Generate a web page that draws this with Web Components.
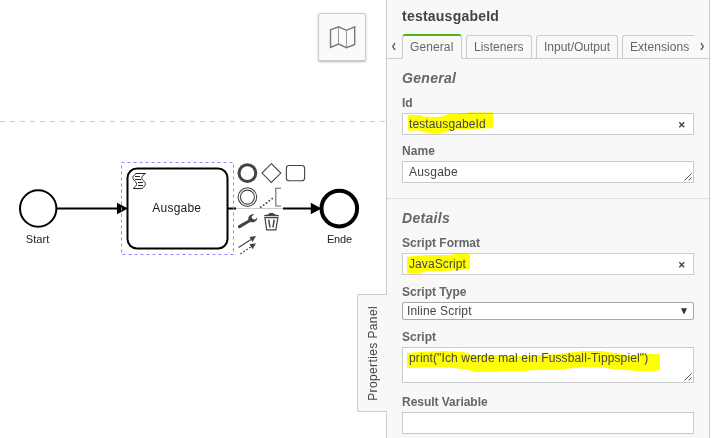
<!DOCTYPE html>
<html lang="en">
<head>
<meta charset="utf-8">
<title>Process modeler</title>
<style>
html,body{margin:0;height:100%;overflow:hidden;background:#fff}
body{font-family:"Liberation Sans",Arial,sans-serif;font-size:12px;color:#444}
</style>
</head>
<body>
<modeler-app></modeler-app>
<script>
function define(name, html, setup) {
  const template = document.createElement('template');
  template.innerHTML = html;
  customElements.define(name, class extends HTMLElement {
    constructor() {
      super();
      this.attachShadow({mode: 'open'}).append(template.content.cloneNode(true));
    }
    connectedCallback() { if (setup) setup(this, this.shadowRoot); }
  });
}

define('process-diagram', `
<style>
:host{display:block;width:386px;height:438px}
svg{display:block}
text{fill:#222;font-family:"Liberation Sans",Arial,sans-serif}
</style>
<svg width="386" height="438" viewBox="0 0 386 438" fill="none">
  <path d="M0 121.5H386" stroke="#ccc" stroke-dasharray="5 5"/>
  <g stroke="#000" stroke-width="2">
    <circle cx="38.2" cy="208.5" r="18.2"/>
    <path d="M57 208.5H119M228 208.5H313"/>
    <circle cx="339.3" cy="208.6" r="17.8" stroke-width="4"/>
    <rect x="127.5" y="168.5" width="100" height="80" rx="9.5" fill="#fff"/>
  </g>
  <path d="M117 202.8L128 208.5L117 214.2ZM310.8 202.8L321.5 208.5L310.8 214.2Z" fill="#000"/>
  <rect x="121.5" y="162.5" width="112" height="92" stroke="#8888ff" stroke-dasharray="3 3"/>
  <g stroke="#111" stroke-width=".9">
    <path d="M136 173.5H145.5C141.5 176 140.7 178.3 143.2 180.5C146.3 183.2 146.3 185.2 142 188.5H133.2C137 185.6 137.7 183.6 134.8 181C131.8 178.4 132.2 176.2 136 173.5Z"/>
    <path d="M135 176.5H140M135 179.5H141M138 182.5H143M138 185.5H143"/>
  </g>
  <text x="25.8" y="243" font-size="11" textLength="23.5">Start</text>
  <text x="152.3" y="212" font-size="12" textLength="48.7">Ausgabe</text>
  <text x="327" y="243" font-size="11" textLength="25">Ende</text>
  <path d="M236 208.5H283" stroke="#fff" stroke-width="3"/>
  <path d="M236 208.5H283" stroke="#ccc" stroke-width="1"/>
  <g stroke="#444" stroke-width="1.1">
    <circle cx="247.4" cy="173.1" r="8.4" stroke-width="3"/>
    <path d="M271.4 163.7L280.8 173.1L271.4 182.5L262 173.1Z"/>
    <rect x="286.4" y="165.5" width="18.2" height="15.2" rx="2.8"/>
    <circle cx="247.4" cy="197.1" r="9.3"/>
    <circle cx="247.4" cy="197.1" r="7"/>
    <path d="M281 188.2H275.8V206H281" stroke="#666"/>
    <path d="M260.7 207.3L275 196.5" stroke-width="1.9" stroke-linecap="round" stroke-dasharray="0 3.6"/>
    <path d="M264.9 217.6L266.7 229.9H275.8L278 217.6Z" stroke-width="1.2"/>
    <path d="M268.7 219.5L270 227.5M274.2 219.5L273 227.5" stroke-width="1.5"/>
    <path d="M238.5 247.5L251 239.5"/>
    <path d="M240.3 254L251 246.7" stroke-dasharray="2 1.5"/>
  </g>
  <g fill="#444">
    <path d="M264 216.2V215.2L268.5 214.3L269.5 213H273.5L274.5 214.3L279 215.2V216.2Z"/>
    <path d="M238.2 225.5L248.3 219.7C247.9 216.4 250.5 213.6 254.2 214.4L251.5 216.5L252.5 219L255 219.5L257.3 217.4C257.5 220.8 253.8 223 250.2 222L240 228.2C238.4 228.5 237.4 226.7 238.2 225.5Z"/>
    <path d="M256 236L249.4 237L252.6 242.1ZM256 243.2L249.4 244.2L252.6 249.3Z"/>
  </g>
</svg>`);

define('map-toggle', `
<style>
:host{display:flex;box-sizing:border-box;width:48px;height:48px;align-items:center;justify-content:center;background:#fafafa;border:1px solid #ccc;border-radius:2px;box-shadow:0 1px 2px rgba(0,0,0,.3)}
svg{display:block}
</style>
<svg width="28" height="24" viewBox="0 0 28 24" fill="none" stroke="#777">
  <path d="M2.5 4.8L10.5 1.8L18.5 5.3L26.7 1.8V19.5L18.5 22.7L10.5 19L2.5 22.4Z" stroke-width="1.4"/>
  <path d="M10.5 2V19M18.5 5V22.5" stroke-width="1" stroke="#999"/>
</svg>`);

define('panel-toggle', `
<style>
:host{display:flex;box-sizing:border-box;width:30px;height:118px;align-items:center;justify-content:center;background:#f8f8f8;border:1px solid #ccc;border-right:0;border-radius:2px 0 0 2px}
span{writing-mode:vertical-rl;transform:rotate(180deg);font-size:12px;letter-spacing:.38px;white-space:nowrap;color:#444}
</style><span><slot></slot></span>`);

define('panel-tab', `
<style>
:host{display:block;box-sizing:border-box;flex:none;height:23px;border:1px solid #ccc;border-bottom:0;border-radius:3px 3px 0 0;background:#f8f8f8;padding:4px 0 0 7px;line-height:15px;color:#666;white-space:nowrap}
:host([active]){height:25px;border-top:2px solid #52b415;margin-bottom:-1px}
:host([clipped]){border-right:0;border-top-right-radius:0}
</style><slot></slot>`);

define('tab-bar', `
<style>
:host{display:flex;align-items:flex-end;box-sizing:border-box;height:25px;border-bottom:1px solid #ccc}
.tabs{display:flex;gap:4px;align-items:flex-end;width:292px}
svg{flex:none;width:15px;height:24px}
</style>
<svg viewBox="0 0 15 24" fill="none" stroke="#555" stroke-width="1.4"><path d="M8 9L5.8 12.5L8 16"/></svg>
<div class="tabs"><slot></slot></div>
<svg viewBox="0 0 15 24" fill="none" stroke="#555" stroke-width="1.4"><path d="M7 9L9.2 12.5L7 16"/></svg>`);

define('panel-group', `
<style>
:host{display:block;padding:11px 15px 0}
h2{margin:0 0 10px;font:italic bold 14px/16px "Liberation Sans",Arial,sans-serif;letter-spacing:.3px;color:#666}
</style><h2></h2><slot></slot>`,
(el, root) => root.querySelector('h2').textContent = el.getAttribute('heading'));

define('property-field', `
<style>
:host{display:block;height:48px}
.label{height:14px;line-height:14px;font-weight:bold;color:#666;margin-bottom:3px;white-space:nowrap}
.box{position:relative;box-sizing:border-box;display:flex;justify-content:space-between;width:292px;height:22px;border:1px solid #ccc;background:#fff;padding:0 7px 0 6px;line-height:20px;color:#444;white-space:nowrap}
.value{position:relative;letter-spacing:var(--value-spacing,.1px)}
.mark{position:absolute;left:0;top:0;overflow:visible;mix-blend-mode:multiply;pointer-events:none}
.clear,.arrow,.grip{display:none;flex:none}
:host([clearable]) .clear{display:block;align-self:center;margin-top:2px}
:host([kind=area]) .grip,:host([kind=tall]) .grip{display:block;align-self:flex-end;margin:0 -6px 1px}
:host([kind=tall]) .box{height:36px}
:host([kind=select]) .box{height:18px;border-color:#a9a9a9;border-radius:2px;padding-left:4px;line-height:16px}
:host([kind=select]) .arrow{display:block;align-self:center;margin-right:-1px}
</style>
<div class="label"></div>
<div class="box">
  <svg class="mark" width="290" height="20"></svg>
  <span class="value"><slot></slot></span>
  <svg class="clear" width="8" height="8" viewBox="0 0 8 8" stroke="#444" stroke-width="1.4"><path d="M1.3 1.2L6.2 6.3M6.2 1.2L1.3 6.3"/></svg>
  <svg class="arrow" width="6" height="6" viewBox="0 0 6 6" fill="#333"><path d="M0 .2H6L3.3 6H2.7Z"/></svg>
  <svg class="grip" width="8" height="8" viewBox="0 0 8 8" stroke="#555"><path d="M.5 7.5L7.5 .5M4.5 7.5L7.5 4.5"/></svg>
</div>`,
(el, root) => {
  root.querySelector('.label').textContent = el.getAttribute('label');
  root.querySelector('.label').style.letterSpacing = el.getAttribute('spacing') || '0';
  const mark = el.getAttribute('mark');
  if (mark) root.querySelector('.mark').innerHTML = '<path fill="#ff0" d="' + mark + '"/>';
});

define('properties-panel', `
<style>
:host{display:block;box-sizing:border-box;width:324px;height:438px;overflow:hidden;background:#f8f8f8;border:1px solid #ccc;border-width:0 1px}
h1{margin:0;padding:8px 15px 0;height:26px;box-sizing:border-box;font:bold 14px/16px "Liberation Sans",Arial,sans-serif;letter-spacing:.23px;color:#444}
tab-bar{margin-top:8px}
.details{margin-top:6px;border-top:1px dotted #ccc}
</style>
<h1>testausgabeId</h1>
<tab-bar>
  <panel-tab active style="width:60px;letter-spacing:.1px">General</panel-tab>
  <panel-tab style="width:66px;letter-spacing:.1px">Listeners</panel-tab>
  <panel-tab style="width:82px;letter-spacing:0">Input/Output</panel-tab>
  <panel-tab clipped style="width:72px;letter-spacing:.05px">Extensions</panel-tab>
</tab-bar>
<panel-group heading="General">
  <property-field label="Id" clearable mark="M5 1L18 1L20 2.5L37 3L45 0L60 -.5L66 -1.5H90V14L70 15L50 15.5L45 18L38 19H28L20 18L16 16.5H5Z">testausgabeId</property-field>
  <property-field label="Name" kind="area" spacing=".1px" style="--value-spacing:.2px">Ausgabe</property-field>
</panel-group>
<panel-group class="details" heading="Details">
  <property-field label="Script Format" clearable mark="M4 3L10 2L24 1L48 1L52 -.5H62V0H67V15L56 16L43 17L22 17.5L18 19H4Z" style="height:49px">JavaScript</property-field>
  <property-field label="Script Type" kind="select" style="height:45px;--value-spacing:.15px">Inline Script</property-field>
  <property-field label="Script" kind="tall" mark="M4 5L18 4L40 3L61 4L68 7H90L120 8L155 6L180 3H198L212 5L227 8L240 6H257V22L251 23H234L222 22L210 21L195 19L170 20L154 22H133L121 23H100L93 24H72L65 22L52 20L38 19H23L4 20Z" style="height:65px;--value-spacing:.13px">print("Ich werde mal ein Fussball-Tippspiel")</property-field>
  <property-field label="Result Variable" spacing="-.03px"></property-field>
</panel-group>`);

define('modeler-app', `
<style>
:host{display:flex;position:relative;width:714px;height:438px;overflow:hidden;background:#fff}
map-toggle{position:absolute;left:318px;top:13px}
panel-toggle{position:absolute;left:357px;top:294px}
</style>
<process-diagram></process-diagram>
<properties-panel></properties-panel>
<map-toggle></map-toggle>
<panel-toggle>Properties Panel</panel-toggle>`);
</script>
</body>
</html>
